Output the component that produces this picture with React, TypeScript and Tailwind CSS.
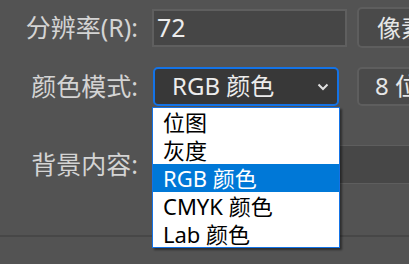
import React from "react";

const font = { fontFamily: '"Noto Sans", "Noto Sans CJK SC", sans-serif' };

export default function App() {
  return (
    <div
      className="relative w-[409px] h-[264px] overflow-hidden bg-[#535353] text-[#d4d4d4]"
      style={font}
    >
      {/* Row 1 */}
      <div className="flex items-center h-[41px] mt-[7px]">
        <div className="w-[140px] shrink-0 text-right text-[25px] leading-none pr-[2px]">分辨率(R):</div>
        <div className="ml-[12px] w-[195px] h-[38px] shrink-0 border-2 border-[#5f5f5f] bg-[#464646] flex items-center pl-[3px] text-[25px] text-[#ececec]">
          72
        </div>
        <div className="ml-[10px] w-[80px] h-[41px] shrink-0 rounded-[5px] border-2 border-[#5e5e5e] bg-[#4a4a4a] flex items-center pl-[18px] text-[24px] text-[#e6e6e6]">
          像素
        </div>
      </div>

      {/* Row 2 */}
      <div className="flex items-center h-[40px] mt-[18px]">
        <div className="w-[140px] shrink-0 text-right text-[25px] leading-none pr-[2px]">颜色模式:</div>
        <div className="ml-[13px] w-[186px] h-[39px] shrink-0 rounded-[5px] border-2 border-[#1473e6] bg-[#383838] flex items-center justify-between pl-[17px] pr-[8px] text-[24px] text-[#ececec]">
          <span>RGB 颜色</span>
          <svg width="12" height="8" viewBox="0 0 12 8" className="mt-[2px]">
            <path d="M1.5 1.5 L6 6 L10.5 1.5" fill="none" stroke="#e0e0e0" strokeWidth="2" />
          </svg>
        </div>
        <div className="ml-[18px] w-[80px] h-[39px] shrink-0 rounded-[5px] border-2 border-[#5e5e5e] bg-[#4a4a4a] flex items-center pl-[16px] text-[24px] text-[#e6e6e6]">
          8 位
        </div>
      </div>

      {/* Row 3 */}
      <div className="flex items-center h-[39px] mt-[39px]">
        <div className="w-[140px] shrink-0 text-right text-[25px] leading-none pr-[2px]">背景内容:</div>
        <div className="ml-[13px] w-[270px] h-[39px] shrink-0 border-y border-[#5e5e5e] bg-[#474747]"></div>
      </div>

      {/* bottom separator */}
      <div className="mt-[51px] h-[2px] bg-[#474747]"></div>

      {/* Dropdown list */}
      <div
        className="absolute left-[152px] top-[107px] w-[188px] h-[141px] bg-white border border-[#1473e6] text-black text-[22px] leading-none shadow-[2px_2px_2px_rgba(0,0,0,0.45)]"
      >
        {["位图", "灰度", "RGB 颜色", "CMYK 颜色", "Lab 颜色"].map((t, i) => (
          <div
            key={t}
            className={
              "h-[28px] flex items-center pl-[10px] " +
              (i === 2 ? "bg-[#0078d7] text-white" : "")
            }
          >
            {t}
          </div>
        ))}
      </div>
    </div>
  );
}
